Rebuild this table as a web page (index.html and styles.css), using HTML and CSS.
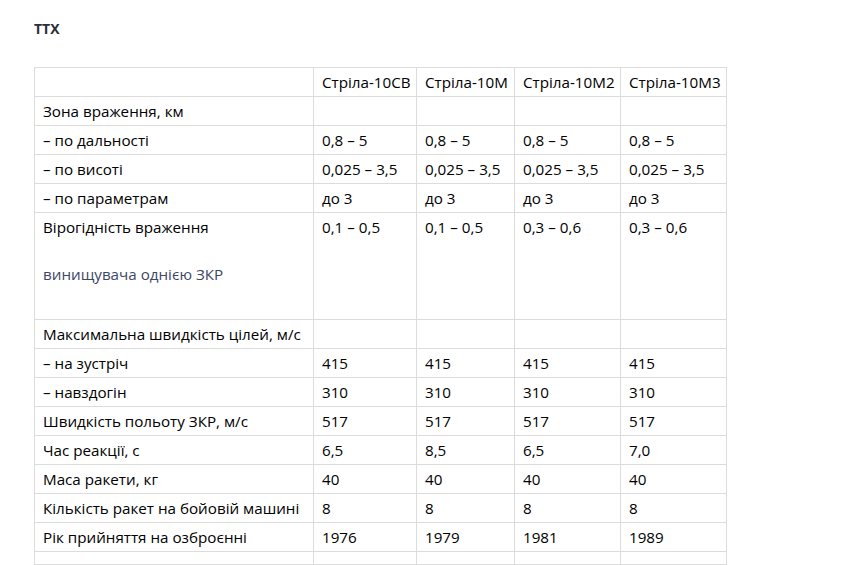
FILE: index.html
```html
<!DOCTYPE html>
<html lang="uk">
<head>
<meta charset="utf-8">
<link rel="stylesheet" href="styles.css">
</head>
<body>
<div class="page">
  <h3 class="title">ТТХ</h3>
  <table class="ttx">
    <colgroup>
      <col class="c0"><col class="c1"><col class="c2"><col class="c3"><col class="c4">
    </colgroup>
    <tbody>
      <tr><td></td><td>Стріла-10СВ</td><td>Стріла-10М</td><td>Стріла-10М2</td><td>Стріла-10М3</td></tr>
      <tr><td>Зона враження, км</td><td></td><td></td><td></td><td></td></tr>
      <tr><td>– по дальності</td><td>0,8 – 5</td><td>0,8 – 5</td><td>0,8 – 5</td><td>0,8 – 5</td></tr>
      <tr><td>– по висоті</td><td>0,025 – 3,5</td><td>0,025 – 3,5</td><td>0,025 – 3,5</td><td>0,025 – 3,5</td></tr>
      <tr><td>– по параметрам</td><td>до 3</td><td>до 3</td><td>до 3</td><td>до 3</td></tr>
      <tr class="tall"><td>Вірогідність враження<p class="note">винищувача однією ЗКР</p></td><td>0,1 – 0,5</td><td>0,1 – 0,5</td><td>0,3 – 0,6</td><td>0,3 – 0,6</td></tr>
      <tr><td>Максимальна швидкість цілей, м/с</td><td></td><td></td><td></td><td></td></tr>
      <tr><td>– на зустріч</td><td>415</td><td>415</td><td>415</td><td>415</td></tr>
      <tr><td>– навздогін</td><td>310</td><td>310</td><td>310</td><td>310</td></tr>
      <tr><td>Швидкість польоту ЗКР, м/с</td><td>517</td><td>517</td><td>517</td><td>517</td></tr>
      <tr><td>Час реакції, с</td><td>6,5</td><td>8,5</td><td>6,5</td><td>7,0</td></tr>
      <tr><td>Маса ракети, кг</td><td>40</td><td>40</td><td>40</td><td>40</td></tr>
      <tr><td>Кількість ракет на бойовій машині</td><td>8</td><td>8</td><td>8</td><td>8</td></tr>
      <tr><td>Рік прийняття на озброєнні</td><td>1976</td><td>1979</td><td>1981</td><td>1989</td></tr>
      <tr class="empty"><td></td><td></td><td></td><td></td><td></td></tr>
    </tbody>
  </table>
</div>
</body>
</html>
```
FILE: styles.css
```css
html, body {
  margin: 0;
  padding: 0;
  background: #fff;
}
body {
  font-family: "Open Sans", "Noto Sans", sans-serif;
  color: #000;
}
.page {
  padding: 19px 0 0 34px;
}
.title {
  margin: 0 0 29px 0;
  font-size: 14px;
  line-height: 19px;
  font-weight: 700;
  color: #2b2f3a;
}
.ttx {
  border-collapse: collapse;
  table-layout: fixed;
  width: 693px;
  font-size: 15.2px;
  font-weight: 500;
}
.c0 { width: 279px; }
.c1 { width: 103px; }
.c2 { width: 98px; }
.c3 { width: 106px; }
.c4 { width: 106px; }
.ttx td {
  border: 1px solid #dcdcdc;
  padding: 4px 6px 4px 8px;
  height: 20px;
  line-height: 20px;
  vertical-align: top;
  white-space: nowrap;
  overflow: hidden;
}
.ttx .tall td {
  height: 98px;
}
.note {
  margin: 27px 0 0 0;
  color: #3d4766;
}
.ttx .empty td {
  height: 4px;
  padding: 4px 0;
}
```
